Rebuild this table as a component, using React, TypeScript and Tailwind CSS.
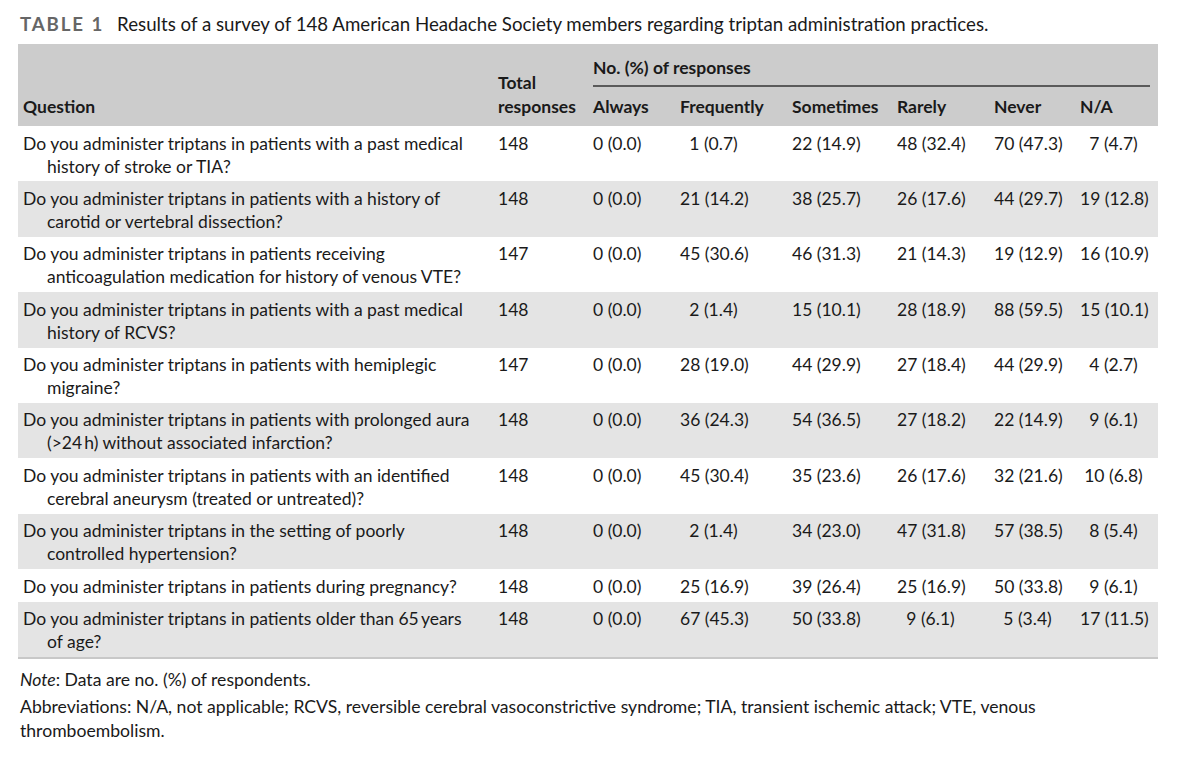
const cols = 'grid grid-cols-[475px_95px_87px_112px_105px_97px_86px_83px]'

type Row = {
  q: string[]
  total: string
  vals: string[]
}

const rows: Row[] = [
  { q: ['Do you administer triptans in patients with a past medical', 'history of stroke or TIA?'], total: '148', vals: ['0 (0.0)', '1 (0.7)', '22 (14.9)', '48 (32.4)', '70 (47.3)', '7 (4.7)'] },
  { q: ['Do you administer triptans in patients with a history of', 'carotid or vertebral dissection?'], total: '148', vals: ['0 (0.0)', '21 (14.2)', '38 (25.7)', '26 (17.6)', '44 (29.7)', '19 (12.8)'] },
  { q: ['Do you administer triptans in patients receiving', 'anticoagulation medication for history of venous VTE?'], total: '147', vals: ['0 (0.0)', '45 (30.6)', '46 (31.3)', '21 (14.3)', '19 (12.9)', '16 (10.9)'] },
  { q: ['Do you administer triptans in patients with a past medical', 'history of RCVS?'], total: '148', vals: ['0 (0.0)', '2 (1.4)', '15 (10.1)', '28 (18.9)', '88 (59.5)', '15 (10.1)'] },
  { q: ['Do you administer triptans in patients with hemiplegic', 'migraine?'], total: '147', vals: ['0 (0.0)', '28 (19.0)', '44 (29.9)', '27 (18.4)', '44 (29.9)', '4 (2.7)'] },
  { q: ['Do you administer triptans in patients with prolonged aura', '(>24\u2009h) without associated infarction?'], total: '148', vals: ['0 (0.0)', '36 (24.3)', '54 (36.5)', '27 (18.2)', '22 (14.9)', '9 (6.1)'] },
  { q: ['Do you administer triptans in patients with an identified', 'cerebral aneurysm (treated or untreated)?'], total: '148', vals: ['0 (0.0)', '45 (30.4)', '35 (23.6)', '26 (17.6)', '32 (21.6)', '10 (6.8)'] },
  { q: ['Do you administer triptans in the setting of poorly', 'controlled hypertension?'], total: '148', vals: ['0 (0.0)', '2 (1.4)', '34 (23.0)', '47 (31.8)', '57 (38.5)', '8 (5.4)'] },
  { q: ['Do you administer triptans in patients during pregnancy?'], total: '148', vals: ['0 (0.0)', '25 (16.9)', '39 (26.4)', '25 (16.9)', '50 (33.8)', '9 (6.1)'] },
  { q: ['Do you administer triptans in patients older than 65\u2009years', 'of age?'], total: '148', vals: ['0 (0.0)', '67 (45.3)', '50 (33.8)', '9 (6.1)', '5 (3.4)', '17 (11.5)'] },
]

const subHeads = ['Always', 'Frequently', 'Sometimes', 'Rarely', 'Never', 'N/A']

export default function App() {
  return (
    <div className="w-[1200px] h-[774px] bg-white text-[#1a1a1a] font-['Lato','Noto_Sans',sans-serif]">
      {/* Caption */}
      <div className="pl-[20px] pt-[12px] h-[44px] text-[18.7px] leading-[24px] whitespace-nowrap">
        <span className="font-bold tracking-[0.1em] text-[#666]">TABLE 1</span>
        <span className="ml-[13px]">Results of a survey of 148 American Headache Society members regarding triptan administration practices.</span>
      </div>

      <div className="ml-[18px] w-[1140px] text-[17.5px] leading-[23px]">
        {/* Header */}
        <div className={`${cols} bg-[#cccccc] font-bold pt-[12px] pb-[7px] whitespace-nowrap`}>
          <div className="self-end px-[5px] leading-[24px]">Question</div>
          <div className="self-end px-[5px] leading-[24px]">
            Total
            <br />
            responses
          </div>
          <div className="col-span-6 flex flex-col">
            <div className="px-[5px] leading-[24px]">No. (%) of responses</div>
            <div className="ml-[5px] mr-[8px] mt-[5px] h-[2px] bg-[#5a5a5a]" />
            <div className="grid grid-cols-[87px_112px_105px_97px_86px_83px] mt-[8px] leading-[24px]">
              {subHeads.map(h => (
                <div key={h} className="px-[5px]">
                  {h}
                </div>
              ))}
            </div>
          </div>
        </div>

        {/* Body rows */}
        {rows.map((r, i) => (
          <div key={i} className={`${cols} pt-[5.5px] pb-[3.9px] whitespace-nowrap ${i % 2 === 1 ? 'bg-[#e4e4e4]' : 'bg-white'}`}>
            <div className="pl-[29px] -indent-[24px]">
              {r.q.map((line, j) => (
                <span key={j}>
                  {j > 0 && <br />}
                  {line}
                </span>
              ))}
            </div>
            <div className="px-[5px]">{r.total}</div>
            {r.vals.map((v, j) => (
              <div key={j} className="px-[5px]">
                {j === 0 ? (
                  <span>{v}</span>
                ) : (
                  <span className="block w-[67px] text-center">{v}</span>
                )}
              </div>
            ))}
          </div>
        ))}
        <div className="h-[2px] bg-[#c8c8c8]" />
      </div>

      {/* Footnotes */}
      <div className="ml-[20px] w-[1150px] mt-[9px] text-[17.6px] leading-[24px]">
        <p>
          <i>Note</i>: Data are no. (%) of respondents.
        </p>
        <p className="mt-[3px]">
          Abbreviations: N/A, not applicable; RCVS, reversible cerebral vasoconstrictive syndrome; TIA, transient ischemic attack; VTE, venous
          <br />
          thromboembolism.
        </p>
      </div>
    </div>
  )
}
